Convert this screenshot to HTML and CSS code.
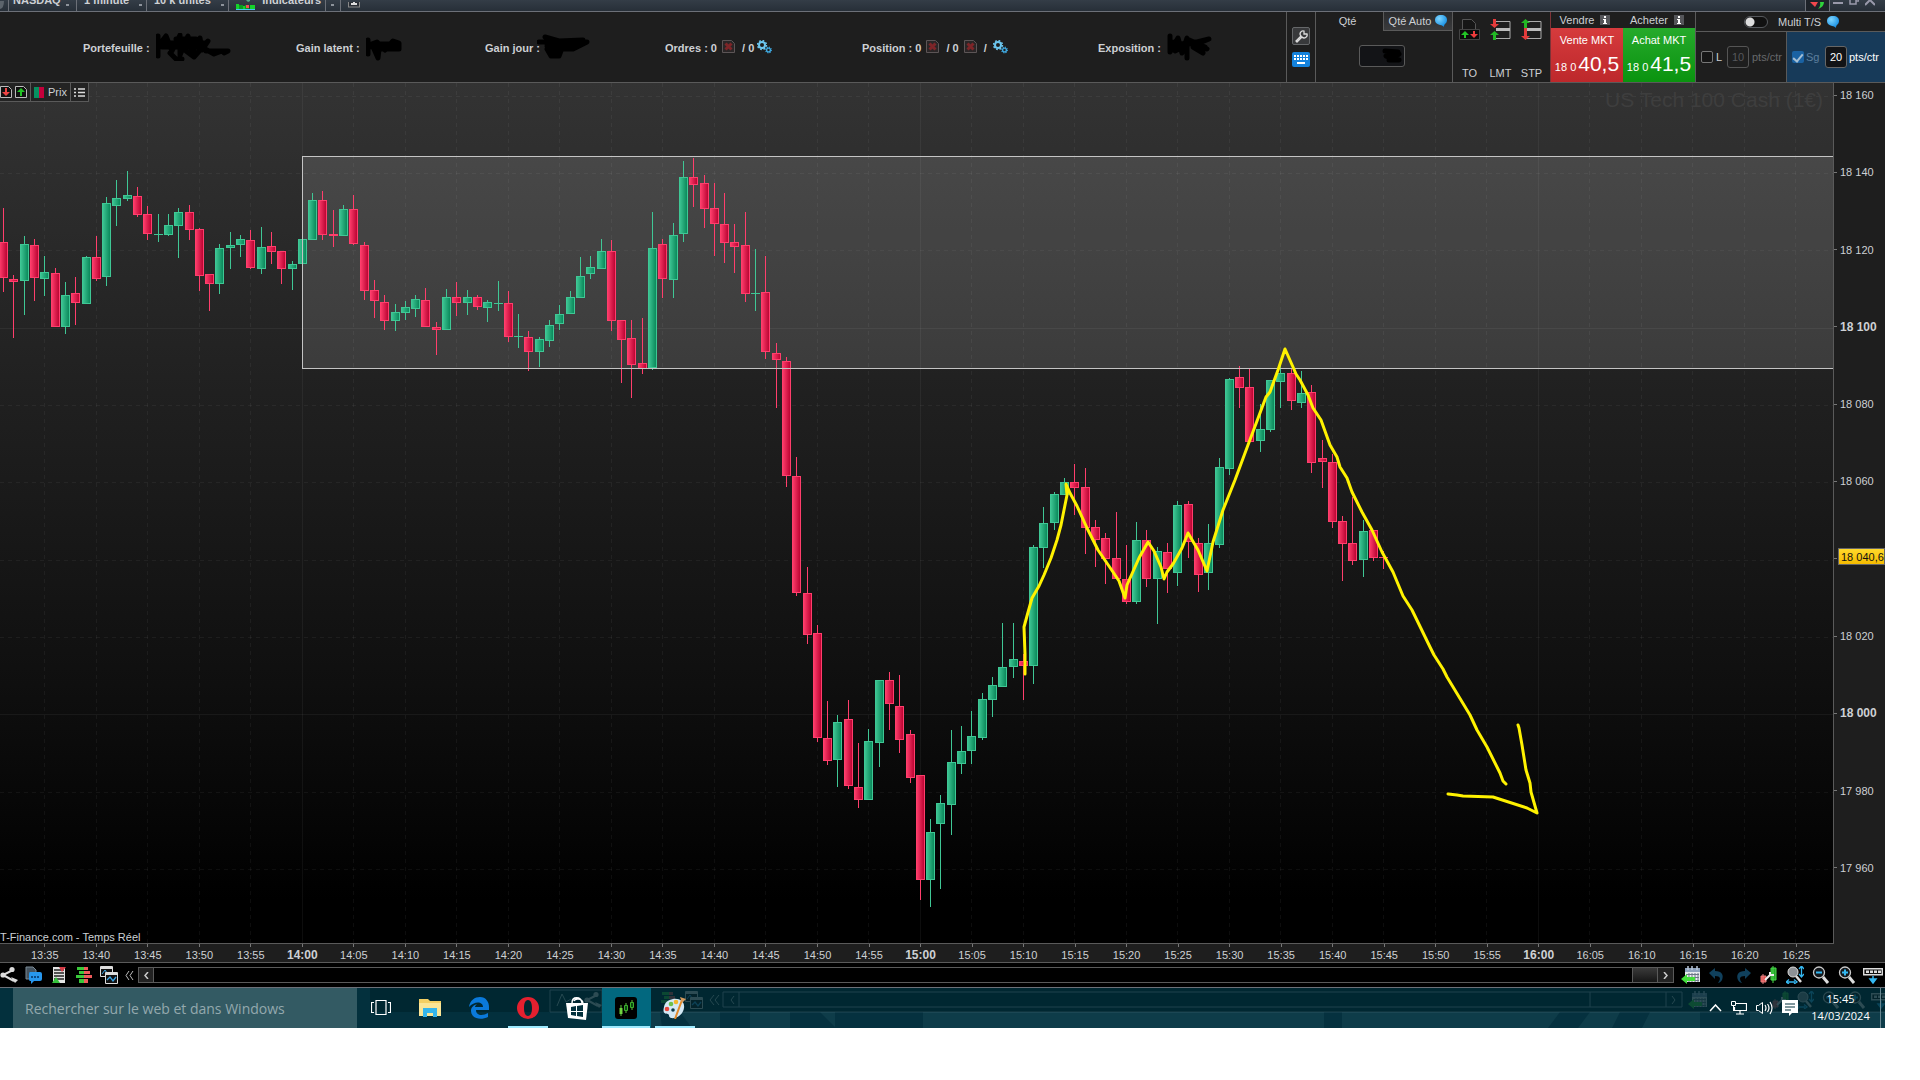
FILE: index.html
```
<!DOCTYPE html>
<html lang="fr">

<head>
    <meta charset="UTF-8">
    <title>US Tech 100 Cash (1€)</title>
    <link rel="stylesheet" href="styles.css">
</head>

<body>
    <!-- shared icons -->
    <svg class="defs" width="0" height="0">
        <defs>
            <linearGradient id="up"><stop offset="0" stop-color="#3fc795"/><stop offset="1" stop-color="#078557"/></linearGradient>
            <linearGradient id="down"><stop offset="0" stop-color="#ff3e6c"/><stop offset="1" stop-color="#b8002f"/></linearGradient>
            <radialGradient id="ball" cx=".35" cy=".3" r=".8"><stop offset="0" stop-color="#7fd6ff"/><stop offset="1" stop-color="#0a86e0"/></radialGradient>
        </defs>
        <symbol id="i-bubble" viewBox="0 0 12 12"><path d="M6 0C2 0 0 2 0 5s2 4 5 5c2 0 3 1 4 2 0-1 0-2 1-3 1-1 2-2 2-4 0-3-2-5-6-5z" fill="url(#ball)"/></symbol>
        <symbol id="i-info" viewBox="0 0 10 10"><rect width="10" height="10" fill="#55565a"/><path d="M4 1h2v2H4zM3 4h3v4h1v1H3V8h1V5H3z" fill="#fff"/></symbol>
        <symbol id="i-cancel" viewBox="0 0 13 13"><path d="M.5.5h9l3 3v9H.5z" fill="#2a2627" stroke="#5c5556"/><path d="M3.5 3.5l6 6m0-6l-6 6" stroke="#7d2528" stroke-width="3"/></symbol>
        <symbol id="i-gears" viewBox="0 0 15 14">
            <circle cx="5" cy="5" r="3" fill="none" stroke="#6cc6ee" stroke-width="2"/>
            <circle cx="5" cy="5" r="4.4" fill="none" stroke="#6cc6ee" stroke-width="1.6" stroke-dasharray="1.7 1.75"/>
            <circle cx="11.5" cy="10" r="1.9" fill="none" stroke="#3fa9e0" stroke-width="1.4"/>
            <circle cx="11.5" cy="10" r="2.8" fill="none" stroke="#3fa9e0" stroke-width="1.2" stroke-dasharray="1.1 1.1"/>
        </symbol>
        <symbol id="i-share" viewBox="0 0 18 18"><path d="M13 4L3 9l11 6" fill="none" stroke="#ddd" stroke-width="2"/><circle cx="12" cy="3.500" r="2.600" fill="#ddd"/><circle cx="3" cy="9" r="2.600" fill="#ddd"/><path d="M11 11l7 3-3 3z" fill="#ddd"/></symbol>
        <symbol id="i-comment" viewBox="0 0 18 18"><path d="M1 1h7l3 3v9H1z" fill="#45525d" stroke="#7b8a96"/><path d="M5 6h10q2 0 2 2v5q0 2-2 2H9l-3 3v-3H5q-1 0-1-2V8q0-2 1-2z" fill="#2797ee"/><path d="M6 10h2v2H6zm3 0h2v2H9zm3 0h2v2h-2z" fill="#0a4a86"/></symbol>
        <symbol id="i-doc" viewBox="0 0 18 18"><path d="M3 1h12v16H3z" fill="#e4e4e4"/><path d="M4 4h10M4 7h10M4 10h10M4 13h10" stroke="#222" stroke-width="1.500"/><path d="M9 1h7l-4 5z" fill="#d33a44"/><path d="M2 17h8l-4-6z" fill="#35c23c"/></symbol>
        <symbol id="i-book" viewBox="0 0 18 18"><path d="M2 1h7v3H2zM4 5h5v3H4zM1 9h8v3H1zM4 13h5v4H4z" fill="#39c83a"/><path d="M9 1h4v3H9zM9 5h6v3H9zM9 9h8v3H9zM9 13h4v4H9z" fill="#ef5b5b"/></symbol>
        <symbol id="i-charts" viewBox="0 0 18 18"><path d="M.5.5h12v10H.5z" fill="#111" stroke="#ddd"/><path d="M.5 2h12" stroke="#ddd" stroke-width="2"/><path d="M2 8l3-4 2 3" fill="none" stroke="#3aa6e8"/><path d="M5.500 6.500h12v11h-12z" fill="#111" stroke="#ddd"/><path d="M5.500 8h12" stroke="#ddd" stroke-width="2"/><path d="M7 14l3-3 3 4 3-4" fill="none" stroke="#3aa6e8" stroke-width="1.300"/></symbol>
        <symbol id="i-calendar" viewBox="0 0 20 18"><path d="M4 2h15v14H4z" fill="#e7eaee"/><path d="M4 2h15v4H4z" fill="#8ea2bd"/><path d="M7 0v4m4-4v4m5-4v4" stroke="#b9c6d8" stroke-width="1.500"/><path d="M5 8.500h13m-13 3h13m-13 3h13M8 7v9m3-9v9m3-9v9m3-9v9" stroke="#6c7686"/><path d="M0 13l6-5v3h8v4H6v3z" fill="#43dc3b"/></symbol>
        <symbol id="i-undo" viewBox="0 0 16 16"><path d="M0 6l6-5v3c7 0 9 4 7 9-1 2-3 3-4 3 3-4 3-7-3-7v3z" fill="#10405c"/></symbol>
        <symbol id="i-tool" viewBox="0 0 18 18"><path d="M1 10h5v6H1zM3 8v10" fill="#e14d4d" stroke="#e98080"/><path d="M11 2h5v12h-5zM13 0v17" fill="#28a12c" stroke="#46dc49"/><path d="M5 14l5-5V6m0 3h4" fill="none" stroke="#eee" stroke-width="2"/></symbol>
        <symbol id="i-fit" viewBox="0 0 18 18"><circle cx="7" cy="6" r="5" fill="#8d9196" stroke="#ddd"/><path d="M10 10l5 6" stroke="#ddd" stroke-width="2.500"/><path d="M15.500 1v9M13 3l2.500-3L18 3M13 8l2.500 3L18 8M1 16h8M3 13.500L0 16l3 2M8 13.500l3 2.500-3 2" fill="none" stroke="#35b8f2" stroke-width="1.300"/></symbol>
        <symbol id="i-zoomout" viewBox="0 0 18 18"><circle cx="7" cy="6.500" r="5.500" fill="#14181c" stroke="#ccc" stroke-width="1.300"/><path d="M11 11l5 6" stroke="#ddd" stroke-width="3"/><path d="M4 6.500h6" stroke="#35b8f2" stroke-width="2"/></symbol>
        <symbol id="i-zoomin" viewBox="0 0 18 18"><use href="#i-zoomout"/><path d="M7 3.500v6" stroke="#35b8f2" stroke-width="2"/></symbol>
        <symbol id="i-panel" viewBox="0 0 20 18"><path d="M.7 2.700h18.600v6H.7z" fill="#111" stroke="#ddd" stroke-width="1.400"/><path d="M3 4.500h3v2.500H3zm4 0h3v2.500H7zm4 0h3v2.500h-3zm4 0h3v2.500h-3z" fill="#ddd"/><path d="M10 10v6M7 13l3 4 3-4z" stroke="#35b8f2" stroke-width="1.500" fill="#35b8f2"/></symbol>
    </svg>

    <div class="screen">
        <header class="titlebar">
            <button class="tab tab-edge" aria-label="Horloge"><svg width="5" height="10" viewBox="0 0 5 10"><path d="M0 0h4q0 7-4 8z" fill="#5c646c"/></svg></button>
            <button class="tab tab-symbol">NASDAQ <i></i></button>
            <button class="tab tab-unit">1 minute <i></i></button>
            <button class="tab tab-count">10 k unités <i></i></button>
            <button class="tab tab-indic"><svg width="19" height="10" viewBox="0 0 19 10"><path d="M0 4h3v5H0zm7 2h2v3H7zm7-1h5v4h-5z" fill="#16d32a"/><path d="M3 5h4v4H3zm6 0h4v4H9z" fill="#0a9c20"/><path d="M10 5h3v3h-3z" fill="#f05252"/><path d="M0 9.500h19" stroke="#45c6f3"/><path d="M10 0h4v1l-2 1z" fill="#5a8"/></svg>Indicateurs</button>
            <button class="tab tab-more" aria-label="Plus"><i></i></button>
            <button class="tab tab-info" aria-label="Information"><svg width="12" height="6"><rect x=".5" y="-6" width="11" height="11" fill="#2b2f36" stroke="#888"/><path d="M3 2h6M6-1v3" stroke="#ddd" stroke-width="2"/></svg></button>
            <span class="grow"></span>
            <button class="tab tab-sync" aria-label="Synchroniser"><svg width="16" height="8" viewBox="0 0 16 8"><path d="M0 0h8L5 5z" fill="#f2474d"/><path d="M14 0q0 5-6 7 3-3 2-7z" fill="#2fd23b"/></svg></button>
            <button class="win" aria-label="Réduire"><svg width="10" height="6"><path d="M0 3h10" stroke="#99a" stroke-width="2"/></svg></button>
            <button class="win" aria-label="Restaurer"><svg width="10" height="6"><path d="M1 0v4h6V0M7 1h3V0" fill="none" stroke="#99a" stroke-width="1.500"/></svg></button>
            <button class="win" aria-label="Fermer"><svg width="10" height="6"><path d="M0 5l5-5 5 5" fill="none" stroke="#99a" stroke-width="2"/></svg></button>
        </header>

        <section class="trading">
            <div class="account">
                <div>Portefeuille : <svg class="ink" width="75" height="28" viewBox="0 0 75 28"><path d="M2 3v20M3 12L10 3 16 18 24 2 24 22 32 3 36 20 44 5 46 17 52 8 38 24 30 18M8 10h40M6 14h40M14 20l6 6h6M20 6h20M42 12l16 9 8-3M50 18h22l-4 2"/></svg></div>
                <div>Gain latent : <svg class="ink" width="38" height="28" viewBox="0 0 38 28"><path d="M2 7v14M3 12l8-3 8 8 8-9 6 2v6H8l4 9 1-9M6 14h26M8 11h24"/></svg></div>
                <div>Gain jour : <svg class="ink ink-over" width="53" height="28" viewBox="0 0 53 28"><path d="M2 9h48L36 16H10l4 7h8l3-8M8 4l14 4 24-1M10 11h36M14 18h8M10 13h26"/></svg></div>
                <div>Ordres : 0 <svg class="x" width="13" height="13"><use href="#i-cancel"/></svg> / 0 <svg class="g" width="15" height="14"><use href="#i-gears"/></svg></div>
                <div>Position : 0 <svg class="x" width="13" height="13"><use href="#i-cancel"/></svg> / 0 <svg class="x" width="13" height="13"><use href="#i-cancel"/></svg> /  <svg class="g" width="15" height="14"><use href="#i-gears"/></svg></div>
                <div>Exposition : <svg class="ink" width="46" height="28" viewBox="0 0 46 28"><path d="M3 3v16l8-14 4 15 5-15v20M5 9l12 2M5 14h14M8 18l14-7 20-5-12 5 10 5-14-2 10 6M20 6l18 8M20 9h14"/></svg></div>
            </div>

            <div class="tools">
                <button class="tool" aria-label="Réglages"><svg width="14" height="14" viewBox="0 0 14 14"><path d="M2 12l5-5a3 3 0 0 1 3-5v3h3a3 3 0 0 1-5 3l-5 5z" fill="none" stroke="#ddd" stroke-width="1.300"/></svg></button>
                <button class="tool tool-keys" aria-label="Clavier"><svg width="14" height="10" viewBox="0 0 14 10"><path d="M0 1h14M0 4h14" stroke="#fff" stroke-width="2" stroke-dasharray="2 1"/><path d="M3 8h8" stroke="#fff" stroke-width="2"/></svg></button>
            </div>

            <div class="qty">
                <div class="qty-tabs">
                    <label for="qte">Qté</label>
                    <button>Qté Auto <svg width="12" height="12"><use href="#i-bubble"/></svg></button>
                </div>
                <div class="qty-field">
                    <input id="qte" type="text">
                    <svg class="ink" width="20" height="16" viewBox="0 0 20 16"><path d="M3 3l13 1-12 4 13 4H7l10-6"/></svg>
                </div>
            </div>

            <div class="orders">
                <button><svg width="21" height="21" viewBox="0 0 21 21"><path d="M3.500 10V.5h9l4 4V10" fill="#161616" stroke="#555"/><path d="M.5 10.500h20v10H.5z" fill="#0c0c0c" stroke="#444"/><path d="M6 12l4 4H7v3H5v-3H2z" fill="#22c325"/><path d="M15 19l4-4h-3v-3h-2v3h-3z" fill="#ee3b3b"/></svg>TO</button>
                <button><svg width="21" height="21" viewBox="0 0 21 21"><path d="M4 2.500h16v17H4" fill="none" stroke="#aaa"/><path d="M6 10.500h14" stroke="#bbb" stroke-width="3"/><path d="M3 0h3v5h3L4.500 9 0 5h3z" fill="#e43b3b"/><path d="M3 21h3v-5h3l-4.500-4L0 16h3z" fill="#22b825"/></svg>LMT</button>
                <button><svg width="21" height="21" viewBox="0 0 21 21"><path d="M4 2.500h16v17H4" fill="none" stroke="#aaa"/><path d="M6 10.500h14" stroke="#bbb" stroke-width="3"/><path d="M3 9h3V4h3L4.500 0 0 4h3z" fill="#22b825"/><path d="M3 9h3v8h3l-4.500 4L0 17h3z" fill="#e43b3b"/></svg>STP</button>
            </div>

            <div class="deal">
                <div class="deal-head">Vendre <svg width="10" height="10"><use href="#i-info"/></svg></div>
                <button class="sell">Vente MKT<span><small>18 0</small>40,5</span></button>
            </div>
            <div class="deal">
                <div class="deal-head">Acheter <svg width="10" height="10"><use href="#i-info"/></svg></div>
                <button class="buy">Achat MKT<span><small>18 0</small>41,5</span></button>
            </div>

            <div class="stops">
                <div class="multi">
                    <input type="checkbox" id="multi" class="switch">
                    <label for="multi">Multi T/S</label>
                    <svg width="12" height="12"><use href="#i-bubble"/></svg>
                </div>
                <div class="stop-row">
                    <div class="limit">
                        <input type="checkbox" id="limit"><label for="limit">L</label>
                        <input type="text" value="10" aria-label="Limite" disabled><span class="dim">pts/ctr</span>
                    </div>
                    <div class="guard">
                        <input type="checkbox" id="guard" checked><label for="guard" class="dim">Sg</label>
                        <input type="text" value="20" aria-label="Stop garanti"><span>pts/ctr</span>
                    </div>
                </div>
            </div>
        </section>

        <main class="chart">
            <div class="plot">
                <svg id="plot" viewBox="0 83 1833 860" preserveAspectRatio="none">
                    <g id="grid"></g>
                    <rect class="zone" x="302" y="156" width="1540" height="213"/>
                    <g id="candles"></g>
                    <path class="zone-line" d="M1840 156.500H302.500v212H1840"/>
                    <path class="pen" d="M1025 674V654L1024 627 1027 616 1032 598 1039 586 1044 575 1051 558 1057 540 1061 525 1064 510 1067 495 1066 484 1070 493 1077 506 1087 528 1098 550 1113 572 1119 581 1125 598 1127 585 1139 558 1148 542 1154 551 1161 567 1164 579 1167 572 1173 564 1182 548 1188 533 1198 550 1207 571 1213 542 1223 510 1235 480 1248 445 1260 413 1266 397 1270 392 1278 370 1285 349 1293 367 1296 374 1300 380 1308 395 1313 408 1321 420 1330 445 1337 457 1340 467 1347 478 1352 492 1362 512 1372 530 1382 552 1393 572 1403 596 1412 610 1430 647 1434 655 1443 669 1447 677 1470 715 1477 730 1487 747 1500 773 1503 781 1506 784"/>
                    <path class="pen" d="M1518 725L1519 728 1522 745 1526 770 1530 783 1531 792 1537 813 1527 808 1493 797 1463 796 1457 795 1448 794"/>
                </svg>
                <div class="watermark">US Tech 100 Cash (1€)</div>
                <div class="legend">
                    <button aria-label="Vendre"><svg width="12" height="12" viewBox="0 0 12 12"><path d="M.5.5h8l3 3v8H.5z" fill="#111" stroke="#bbb"/><path d="M5 2h2v4h3l-4 4-4-4h3z" fill="#f04444"/></svg></button>
                    <button aria-label="Acheter"><svg width="12" height="12" viewBox="0 0 12 12"><path d="M.5.5h8l3 3v8H.5z" fill="#111" stroke="#bbb"/><path d="M5 10h2V6h3L6 2 2 6h3z" fill="#22c325"/></svg></button>
                    <button class="legend-price"><svg width="10" height="11"><rect width="5" height="11" fill="#079060"/><rect x="5" width="5" height="11" fill="#c4003b"/></svg>Prix</button>
                    <button class="legend-list" aria-label="Liste"><svg width="11" height="9" viewBox="0 0 11 9"><path d="M0 1h2m2 0h7M0 4.500h2m2 0h7M0 8h2m2 0h7" stroke="#ddd" stroke-width="1.500"/></svg></button>
                </div>
                <div class="source">IT-Finance.com - Temps Réel</div>
            </div>
            <div class="prices">
                <ol id="prices"></ol>
                <div class="last">18 040,6</div>
            </div>
        </main>

        <ol class="times" id="times"></ol>

        <nav class="bottombar">
            <button aria-label="Partager"><svg width="18" height="18"><use href="#i-share"/></svg></button>
            <button aria-label="Commentaires"><svg width="18" height="18"><use href="#i-comment"/></svg></button>
            <button aria-label="Rapport"><svg width="18" height="18"><use href="#i-doc"/></svg></button>
            <button aria-label="Carnet"><svg width="18" height="18"><use href="#i-book"/></svg></button>
            <button aria-label="Graphiques"><svg width="18" height="18"><use href="#i-charts"/></svg></button>
            <button class="fold" aria-label="Replier"><svg width="9" height="9" viewBox="0 0 9 9"><path d="M4 0L1 4.500 4 9M8 0L5 4.500 8 9" fill="none" stroke="#bbb"/></svg></button>
            <div class="scroll">
                <button aria-label="Reculer"><svg width="5" height="7" viewBox="0 0 5 7"><path d="M4 0L1 3.500 4 7" fill="none" stroke="#ccc" stroke-width="1.500"/></svg></button>
                <span class="grow"></span>
                <span class="thumb"></span>
                <button aria-label="Avancer"><svg width="5" height="7" viewBox="0 0 5 7"><path d="M1 0l3 3.500L1 7" fill="none" stroke="#ccc" stroke-width="1.500"/></svg></button>
            </div>
            <button aria-label="Calendrier"><svg width="20" height="18"><use href="#i-calendar"/></svg></button>
            <button aria-label="Annuler"><svg width="16" height="16"><use href="#i-undo"/></svg></button>
            <button aria-label="Rétablir"><svg class="flip" width="16" height="16"><use href="#i-undo"/></svg></button>
            <button aria-label="Style"><svg width="18" height="18"><use href="#i-tool"/></svg></button>
            <button aria-label="Ajuster"><svg width="18" height="18"><use href="#i-fit"/></svg></button>
            <button aria-label="Zoom arrière"><svg width="18" height="18"><use href="#i-zoomout"/></svg></button>
            <button aria-label="Zoom avant"><svg width="18" height="18"><use href="#i-zoomin"/></svg></button>
            <button aria-label="Panneau"><svg width="20" height="18"><use href="#i-panel"/></svg></button>
        </nav>

        <footer class="taskbar">
            <!-- the window shows faintly through the bar -->
            <svg class="ghost" viewBox="0 0 1885 40" preserveAspectRatio="none">
                <path d="M370 0h1515v24H370z" fill="#00242c" opacity=".7"/>
                <path d="M640 24h1245v16H640z" fill="#164552" opacity=".6"/>
                <path d="M660 24h20l12 16h-30zM720 24h30v16h-30zM790 24h30l16 16h-46zM835 24h88v16h-88zM1324 24h18v16h-18zM1560 24h30l-12 16h-30zM1620 24h30l-8 16h-30zM1700 24h50v16h-50z" fill="#002a38" opacity=".6"/>
                <g opacity=".2">
                    <path d="M550 2h52v22h-52zM723 4h959v15H723zM739 4v15M1590 4v15M1666 4v15M640 24h1245" fill="none" stroke="#9ab"/>
                    <path d="M714 7l-4 5 4 5m5-10l-4 5 4 5M734 8l-3 4 3 4M1672 8l3 4-3 4M557 18l5-12 4 8 5-3" fill="none" stroke="#bcc"/>
                    <use href="#i-share" x="584" y="3" width="18" height="18"/>
                    <use href="#i-comment" x="610" y="3" width="18" height="18"/>
                    <use href="#i-book" x="660" y="3" width="18" height="18"/>
                    <use href="#i-charts" x="685" y="3" width="18" height="18"/>
                    <use href="#i-calendar" x="1688" y="3" width="20" height="18"/>
                    <use href="#i-tool" x="1772" y="3" width="18" height="18"/>
                    <use href="#i-fit" x="1796" y="3" width="18" height="18"/>
                    <use href="#i-zoomout" x="1822" y="3" width="18" height="18"/>
                    <use href="#i-zoomin" x="1848" y="3" width="18" height="18"/>
                    <use href="#i-panel" x="1871" y="3" width="20" height="18"/>
                </g>
            </svg>
            <input class="search" type="text" placeholder="Rechercher sur le web et dans Windows" aria-label="Rechercher">
            <button aria-label="Vue des tâches"><svg width="20" height="18" viewBox="0 0 20 18"><path d="M5 1.500h10v14H5zM3 3.500H.5v10H3M17 3.500h2.500v10H17" fill="none" stroke="#fff" stroke-width="1.200"/></svg></button>
            <button aria-label="Explorateur"><svg width="22" height="20" viewBox="0 0 22 20"><path d="M0 1h9l2 2h11v15H0z" fill="#f4cf63"/><path d="M0 5h22v13H0z" fill="#fbe596"/><path d="M4 10h14v9h-4v-4H8v4H4z" fill="#35b5ec"/></svg></button>
            <button aria-label="Edge"><svg width="22" height="22" viewBox="0 0 22 22"><path d="M1 10C2 3 7 0 12 0c6 0 9 5 9 10v3H8c0 6 7 6 12 3v4C12 24 3 21 3 14c0-4 3-6 6-7-1 1-2 2-2 3h8c0-6-9-6-14 0z" fill="#0a79da"/></svg></button>
            <button class="running" aria-label="Opera"><svg width="22" height="22" viewBox="0 0 22 22"><path fill-rule="evenodd" d="M11 0a11 11 0 1 0 0 22 11 11 0 1 0 0-22zm0 3c3 0 4 4 4 8s-1 8-4 8-4-4-4-8 1-8 4-8z" fill="#e5202f"/></svg></button>
            <button aria-label="Store"><svg width="22" height="23" viewBox="0 0 22 23"><path d="M6 6c0-7 9-7 10 0M8 4c1-3 8-3 9 2" fill="none" stroke="#fff" stroke-width="1.400"/><path d="M0 6h22l-2 17-18-2z" fill="#fff"/><path d="M5 10l5-1v5H5zm6-1l6-1v6h-6zM5 15h5v4l-5-1zm6 0h6v5l-6-1z" fill="#02303c"/></svg></button>
            <button class="running current" aria-label="ProRealTime"><svg width="22" height="22" viewBox="0 0 22 22"><rect width="22" height="22" rx="3" fill="#000"/><path d="M6 8v11M11 6v10M17 3v10" stroke="#5cc23d"/><path d="M4.500 11h3v6h-3z" fill="#6fd43f"/><path d="M9.500 8.500h3v5h-3zM15.500 5.500h3v5h-3z" fill="#0b4a12" stroke="#3cae2c"/></svg></button>
            <button class="running" aria-label="Paint"><svg width="24" height="22" viewBox="0 0 24 22"><path d="M10 2c7-1 12 3 11 9-1 7-8 11-13 10-3-1-1-3-3-4-5 0-5-3-4-7 1-5 4-7 9-8z" fill="#d3e8f4"/><circle cx="4" cy="12" r="2.300" fill="#e8483b"/><circle cx="8" cy="7" r="2.300" fill="#6cc04a"/><circle cx="13" cy="5" r="2.300" fill="#f4b62c"/><circle cx="10" cy="13" r="1.800" fill="#0b3846"/><path d="M12 22l7-19" stroke="#e18a2b" stroke-width="2"/><path d="M17 0l6 2-4 4z" fill="#d39a5d"/></svg></button>
            <span class="grow"></span>
            <div class="tray">
                <svg width="13" height="8" viewBox="0 0 13 8"><path d="M1 7l5.500-6L12 7" fill="none" stroke="#fff" stroke-width="1.500"/></svg>
                <svg width="16" height="14" viewBox="0 0 16 14"><path d="M5 2.500h10.500v7H3.500V6M9 10v3M5 13h8" fill="none" stroke="#fff" stroke-width="1.200"/><path d="M.5.500h4v4h-4zM2.500 4v6" fill="none" stroke="#fff"/></svg>
                <svg width="17" height="14" viewBox="0 0 17 14"><path d="M.5 4.500h2l4-3v11l-4-3h-2z" fill="none" stroke="#fff"/><path d="M9 4q2 3 0 6M11.500 3q3 4 0 8M14 1q4 6 0 12" fill="none" stroke="#fff" stroke-width="1.200"/></svg>
                <svg width="16" height="16" viewBox="0 0 16 16"><path d="M0 0h16v13h-6l-3 3v-3H0z" fill="#fff"/><path d="M3 4h10M3 7h10M3 10h6" stroke="#02303c" stroke-width="1.200"/></svg>
            </div>
            <time class="clock">15:45<br>14/03/2024</time>
            <button class="desktop" aria-label="Afficher le bureau"></button>
        </footer>
    </div>

    <script src="chart.js"></script>
</body>

</html>
```
FILE: styles.css
```
* {
    box-sizing: border-box;
}

body {
    margin: 0;
    background: #fff;
    color: #cdd0d4;
    font: 11px/14px "Liberation Sans", Arial, sans-serif;
}

button {
    display: flex;
    align-items: center;
    justify-content: center;
    padding: 0;
    border: 0;
    background: none;
    color: inherit;
    font: inherit;
}

input {
    margin: 0;
    color: inherit;
    font: inherit;
}

ol {
    margin: 0;
    padding: 0;
    list-style: none;
}

svg {
    flex: none;
}

.defs {
    position: absolute;
}

.grow {
    flex: 1;
}

.screen {
    display: flex;
    flex-direction: column;
    height: calc(100vh - 52px);
    margin-right: 35px;
    overflow: hidden;
    background: #1e1e1e;
}

/* title bar, its top is off screen */
.titlebar {
    display: flex;
    flex: none;
    height: 12px;
    overflow: hidden;
    background: linear-gradient(#343d47, #272f38);
    border-bottom: 1px solid #6c7078;
    font-weight: bold;
}

.tab {
    height: 11px;
    padding: 0 4px 10px 7px;
    justify-content: space-between;
    border-right: 1px solid #6c7078;
    line-height: 11px;
}

.tab i {
    width: 3px;
    height: 2px;
    margin-top: 8px;
    background: #8d939b;
}

.tab svg {
    margin-top: 9px;
}

.tab-edge { width: 9px; padding: 0; }
.tab-symbol { width: 68px; padding-left: 4px; padding-right: 7px; }
.tab-unit { width: 70px; }
.tab-count { width: 82px; }
.tab-indic { width: 97px; }
.tab-more { width: 15px; padding-left: 5px; }
.tab-info { width: 30px; border: 0; }
.tab-sync { width: 25px; padding: 0 4px; border-left: 1px solid #6c7078; background: #1e2329; }

.tab-edge svg,
.tab-sync svg {
    margin-top: 0;
}

.win {
    width: 16px;
    height: 6px;
}

.win:last-child {
    margin-right: 7px;
}

/* trading bar */
.trading {
    display: flex;
    flex: none;
    height: 71px;
    border-bottom: 1px solid #5a5a5a;
}

.account {
    display: grid;
    flex: 1;
    grid-template-columns: 213fr 189fr 180fr 197fr 236fr 188fr;
    align-items: center;
    padding: 2px 0 0 83px;
    font-weight: bold;
    white-space: pre;
}

.account > div {
    display: flex;
    align-items: center;
    height: 28px;
}

.x { margin: 0 4px 4px 2px; }
.g { margin-bottom: 3px; }

.ink path {
    fill: none;
    stroke: #000;
    stroke-width: 5;
    stroke-linecap: round;
    stroke-linejoin: round;
}

.account .ink {
    margin: 0 0 2px 3px;
}

.account .ink-over {
    margin-left: -6px;
}

.tools {
    display: flex;
    flex-direction: column;
    gap: 7px;
    width: 30px;
    padding: 15px 5px;
    border: solid #5a5a5a;
    border-width: 0 1px;
}

.tool {
    width: 18px;
    height: 18px;
    background: #38393b;
    border: 1px solid #66686a;
    border-radius: 2px;
}

.tool-keys {
    height: 15px;
    background: #1482dc;
    border: 0;
}

.qty {
    width: 136px;
}

.qty-tabs {
    display: grid;
    grid-template-columns: 1fr 69px;
    height: 18px;
    line-height: 18px;
    text-align: center;
}

.qty-tabs label {
    padding-right: 4px;
}

.qty-tabs button {
    gap: 4px;
    background: linear-gradient(#292a2c, #3a3b3d);
    border: solid #5a5a5a;
    border-width: 0 0 1px 1px;
}

.qty-field {
    display: flex;
    align-items: center;
    width: 46px;
    height: 22px;
    margin: 15px 0 0 43px;
    border: 1px solid #5a5a5a;
    border-radius: 3px;
    background: #131417;
}

.qty-field input {
    width: 22px;
    border: 0;
    background: none;
}

.orders {
    display: flex;
    gap: 10px;
    width: 98px;
    padding: 7px 7px 2px 6px;
    border-left: 1px solid #5a5a5a;
}

.orders button {
    flex-direction: column;
    justify-content: space-between;
    width: 21px;
}

.deal {
    display: flex;
    flex-direction: column;
    width: 73px;
    border-left: 1px solid #7e3337;
}

.deal + .deal {
    border-left: 0;
    border-right: 1px solid #5a5a5a;
}

.deal-head {
    display: flex;
    align-items: center;
    justify-content: center;
    gap: 6px;
    height: 16px;
    padding: 0 4px 1px 0;
}

.sell,
.buy {
    flex: 1;
    flex-direction: column;
    gap: 6px;
    color: #fff;
}

.sell { background: linear-gradient(#d63b3d, #bd282b); }
.buy { background: linear-gradient(#26aa2c, #0a930f); }

.deal button span {
    font-size: 21px;
    line-height: 21px;
}

.deal small {
    margin-right: 2px;
    font-size: 11px;
}

.stops {
    display: flex;
    flex-direction: column;
    width: 189px;
}

.multi {
    display: flex;
    align-items: center;
    gap: 6px;
    height: 20px;
    padding-left: 48px;
    border-bottom: 1px solid #5a5a5a;
}

.switch {
    width: 24px;
    height: 12px;
    margin-right: 4px;
    appearance: none;
    border: 1px solid #55585c;
    border-radius: 6px;
    background: radial-gradient(circle at 5px 5px, #ddd 4px, #111 5px);
}

.stop-row {
    display: flex;
    flex: 1;
}

.limit,
.guard {
    display: flex;
    align-items: center;
    gap: 3px;
    padding-left: 5px;
}

.limit { width: 90px; }

.guard {
    flex: 1;
    gap: 2px;
    border-left: 1px solid #5a5a5a;
    background: #173a59;
    color: #fff;
}

.limit label { width: 8px; }
.guard label { width: 17px; }

.stop-row input[type="checkbox"] {
    display: flex;
    justify-content: center;
    width: 12px;
    height: 12px;
    appearance: none;
    border: 1px solid #777;
    border-radius: 2px;
    background: #161616;
}

.stop-row input[type="checkbox"]:checked {
    border: 0;
    background: #1a62a3;
}

.stop-row input:checked::before {
    content: "";
    width: 4px;
    height: 8px;
    margin-top: 1px;
    border: solid #a5bfd4;
    border-width: 0 2px 2px 0;
    transform: rotate(40deg);
}

.stop-row input[type="text"] {
    width: 22px;
    height: 22px;
    padding: 0;
    border: 1px solid #666;
    border-radius: 3px;
    background: #121316;
    text-align: center;
}

.stop-row input[type="text"]:disabled {
    border-color: #555;
    background: #1e1e1e;
    color: #56585b;
}

.limit .dim { color: #66686b; }
.guard .dim { color: #5c7f9e; }

/* chart */
.chart {
    display: flex;
    flex: 1;
    min-height: 0;
}

.plot {
    position: relative;
    flex: 1;
    border: solid #5a5a5a;
    border-width: 0 1px 1px 0;
    background: linear-gradient(#333 0%, #202020 36%, #0f0f0f 70%, #000 95%);
}

#plot {
    position: absolute;
    width: 100%;
    height: 100%;
}

#grid path {
    fill: none;
    stroke: #fff;
    stroke-opacity: .05;
    shape-rendering: crispEdges;
}

#grid .minor {
    stroke-dasharray: 4 4;
}

.zone {
    fill: #fff;
    fill-opacity: .12;
}

.zone-line {
    fill: none;
    stroke: #c4c4c4;
    shape-rendering: crispEdges;
}

#candles {
    shape-rendering: crispEdges;
}

.up { fill: url(#up); stroke: #3fc795; }
.down { fill: url(#down); stroke: #ff3e6c; }

.pen {
    fill: none;
    stroke: #fff200;
    stroke-width: 3;
    stroke-linecap: round;
    stroke-linejoin: round;
}

.watermark {
    position: absolute;
    top: 5px;
    right: 10px;
    color: #3e3e3e;
    font-size: 21px;
    line-height: 24px;
}

.legend {
    position: absolute;
    top: 0;
    left: 0;
    display: flex;
    height: 19px;
    border: solid #5a5a5a;
    border-width: 0 1px 1px 0;
    background: #232323;
}

.legend button {
    padding-right: 3px;
}

.legend-price {
    gap: 4px;
    padding-left: 3px;
    border: solid #5a5a5a;
    border-width: 0 1px;
}

.legend-list {
    padding-left: 3px;
}

.source {
    position: absolute;
    bottom: -1px;
    left: -3px;
}

.prices {
    position: relative;
    width: 51px;
}

#prices {
    display: flex;
    flex-direction: column;
    justify-content: space-between;
    height: 100%;
    padding: 5px 0 69px;
}

#prices li {
    display: flex;
    align-items: center;
    gap: 3px;
    height: 14px;
}

#prices li::before {
    content: "";
    width: 3px;
    height: 1px;
    background: #777;
}

#prices .major,
.times .major {
    font-size: 12px;
    font-weight: bold;
}

.last {
    position: absolute;
    top: 54%;
    right: 0;
    width: 47px;
    height: 17px;
    padding-left: 2px;
    border: 1px solid #666;
    background: linear-gradient(#ffd92b, #f5bb00);
    color: #111;
    line-height: 16px;
}

.times {
    display: flex;
    flex: none;
    height: 19px;
    padding: 0 63px 0 19px;
    border-bottom: 1px solid #5a5a5a;
}

.times li {
    flex: 1;
    padding-top: 1px;
    background: linear-gradient(#777, #777) 50% 0 / 1px 3px no-repeat;
    line-height: 20px;
    text-align: center;
}

/* bottom bar */
.bottombar {
    display: flex;
    flex: none;
    align-items: center;
    gap: 7px;
    height: 25px;
    padding-right: 3px;
    background: #000;
    border-bottom: 1px solid #6c7078;
}

.fold {
    margin-right: -3px;
}

.scroll {
    display: flex;
    flex: 1;
    height: 16px;
    border: 1px solid #5a5a5a;
}

.scroll button {
    width: 15px;
    background: #222;
    border-right: 1px solid #5a5a5a;
}

.scroll button:last-child {
    border: 0;
}

.scroll ~ button {
    width: 19px;
}

.thumb {
    width: 26px;
    border: solid #5a5a5a;
    border-width: 0 1px;
    background: linear-gradient(#3a3a3a, #161616);
}

.flip {
    transform: scaleX(-1);
}

/* windows taskbar */
.taskbar {
    position: relative;
    display: flex;
    flex: none;
    height: 40px;
    padding-left: 13px;
    background: #03303d;
    color: #fff;
    font-family: "Open Sans", "Noto Sans", sans-serif;
}

.ghost {
    position: absolute;
    left: 0;
    width: 100%;
    height: 40px;
}

.taskbar > :not(.ghost) {
    position: relative;
}

.search {
    width: 344px;
    padding: 0 12px;
    border: 0;
    background: #335a63;
    font-size: 14px;
}

.search::placeholder {
    color: #93a9ae;
}

.taskbar button {
    width: 49px;
    border-right: 1px solid transparent;
}

.running {
    background: linear-gradient(#9eeaff, #9eeaff) 50% 100% / 40px 2px no-repeat;
}

.current {
    background: linear-gradient(#9eeaff, #9eeaff) 0 100% / 100% 2px no-repeat #02687f;
}

.tray {
    display: flex;
    align-items: center;
    gap: 9px;
    margin-right: 8px;
}

.clock {
    width: 69px;
    margin-right: 5px;
    padding-top: 2px;
    line-height: 17px;
    text-align: center;
}

.taskbar .desktop {
    width: 5px;
    border-left: 1px solid #688791;
}
```
FILE: chart.js
```
// one row per minute from 13:31: direction, high, body top, body bottom, low
const candles = [
    ["d", 208, 242, 278, 292], ["d", 275, 279, 282, 338], ["u", 236, 244, 281, 315], ["d", 239, 245, 278, 301],
    ["u", 256, 272, 279, 296], ["d", 268, 273, 327, 327], ["u", 282, 295, 327, 334], ["d", 277, 293, 303, 325],
    ["u", 256, 257, 304, 304], ["d", 236, 257, 279, 281], ["u", 197, 203, 277, 286], ["u", 180, 198, 206, 226],
    ["u", 171, 195, 199, 201], ["d", 187, 196, 215, 217], ["d", 206, 214, 234, 240], ["u", 214, 234, 235, 242],
    ["u", 214, 225, 235, 236], ["u", 208, 212, 226, 258], ["d", 205, 212, 230, 240], ["d", 228, 229, 276, 291],
    ["d", 274, 274, 284, 311], ["u", 244, 248, 284, 294], ["u", 232, 245, 248, 269], ["u", 235, 239, 245, 257],
    ["d", 230, 240, 268, 269], ["u", 227, 247, 269, 274], ["d", 232, 246, 252, 264], ["d", 251, 251, 269, 284],
    ["u", 261, 264, 269, 290],
    // 14:00
    ["u", 239, 239, 264, 264], ["u", 193, 200, 240, 240], ["d", 191, 200, 235, 240], ["d", 210, 234, 236, 247],
    ["u", 205, 209, 236, 236], ["d", 195, 209, 244, 245], ["d", 242, 245, 291, 300], ["d", 280, 290, 301, 318],
    ["d", 295, 302, 321, 330], ["u", 304, 312, 321, 331], ["u", 301, 307, 313, 320], ["u", 295, 299, 309, 317],
    ["d", 288, 300, 327, 327], ["d", 322, 327, 330, 355], ["u", 289, 297, 330, 330], ["d", 282, 297, 303, 316],
    ["u", 290, 297, 303, 315], ["d", 295, 297, 307, 310], ["u", 300, 302, 308, 322], ["u", 281, 303, 304, 311],
    ["d", 291, 303, 337, 342], ["u", 314, 336, 337, 348], ["d", 331, 337, 352, 371], ["u", 337, 339, 352, 367],
    ["u", 320, 325, 341, 347], ["u", 305, 314, 324, 330], ["u", 291, 297, 314, 314], ["u", 257, 276, 298, 298],
    ["u", 256, 267, 274, 279], ["u", 239, 251, 269, 269], ["d", 240, 251, 321, 331], ["d", 320, 320, 340, 383],
    ["d", 320, 338, 365, 398], ["d", 318, 363, 369, 374], ["u", 212, 248, 368, 370], ["d", 239, 244, 279, 298],
    ["u", 223, 235, 280, 298], ["u", 161, 177, 234, 242], ["d", 158, 177, 185, 207], ["d", 175, 183, 209, 228],
    ["d", 183, 208, 224, 256], ["d", 193, 224, 243, 263], ["d", 224, 242, 247, 273], ["d", 212, 245, 294, 302],
    ["u", 249, 293, 294, 311], ["d", 256, 292, 352, 359], ["d", 343, 353, 360, 408], ["d", 357, 361, 476, 487],
    ["d", 457, 476, 593, 596], ["d", 567, 593, 635, 644], ["d", 625, 633, 738, 742], ["d", 701, 738, 761, 765],
    ["u", 715, 722, 760, 787], ["d", 700, 719, 786, 789], ["d", 743, 787, 800, 808], ["u", 729, 741, 800, 800],
    ["u", 680, 680, 743, 767], ["d", 672, 680, 704, 730], ["d", 675, 706, 740, 753], ["d", 730, 734, 778, 783],
    // 15:00
    ["d", 775, 775, 880, 900], ["u", 819, 832, 880, 907], ["u", 795, 803, 824, 889], ["u", 730, 762, 805, 835],
    ["u", 726, 751, 764, 774], ["u", 711, 736, 751, 764], ["u", 693, 699, 738, 740], ["u", 677, 685, 700, 717],
    ["u", 623, 667, 687, 687], ["u", 623, 659, 667, 678], ["d", 654, 661, 666, 700], ["u", 545, 547, 666, 684],
    ["u", 507, 523, 548, 568], ["u", 492, 494, 523, 530], ["u", 478, 482, 495, 495], ["d", 464, 482, 488, 515],
    ["d", 468, 487, 528, 554], ["d", 520, 527, 540, 567], ["d", 533, 538, 559, 584], ["d", 512, 558, 579, 579],
    ["d", 545, 579, 602, 604], ["u", 522, 540, 602, 604], ["d", 530, 540, 579, 587], ["u", 547, 551, 579, 624],
    ["d", 543, 552, 569, 593], ["u", 501, 505, 573, 586], ["d", 501, 504, 542, 558], ["d", 538, 543, 575, 592],
    ["u", 524, 543, 573, 590], ["u", 458, 467, 545, 548], ["u", 378, 379, 469, 475], ["d", 366, 377, 388, 408],
    ["d", 369, 387, 442, 442], ["u", 404, 429, 441, 452], ["u", 380, 380, 430, 432], ["u", 360, 373, 382, 408],
    ["d", 369, 373, 401, 410], ["u", 371, 393, 403, 408], ["d", 385, 392, 463, 473], ["d", 440, 458, 462, 488],
    ["d", 454, 462, 522, 528], ["d", 516, 521, 544, 581], ["d", 497, 543, 561, 565], ["u", 520, 531, 560, 577],
    ["d", 530, 530, 558, 561], ["d", 551, 557, 558, 569]
];

// x of a minute counted from 14:00
function minuteX(m) {
    return Math.floor(302.3 + 10.3 * m) + 0.5;
}

let bars = "";
candles.forEach(([dir, high, top, bottom, low], i) => {
    const x = minuteX(i - 29);
    const cls = dir === "u" ? "up" : "down";
    bars += `<path class="${cls}" d="M${x} ${high}V${low}"/>`;
    if (bottom - top > 1) {
        bars += `<rect class="${cls}" x="${x - 4}" y="${top + 0.5}" width="8" height="${bottom - top - 1}"/>`;
    } else {
        bars += `<path class="${cls}" d="M${x - 4.5} ${top + 0.5}h9"/>`;
    }
});
document.getElementById("candles").innerHTML = bars;

let grid = "";
let times = "";
for (let m = -25; m <= 145; m += 5) {
    const major = m % 60 === 0;
    const hour = 14 + Math.floor(m / 60);
    const minute = String((m + 60) % 60).padStart(2, "0");
    grid += `<path class="${major ? "major" : "minor"}" d="M${minuteX(m)} 83V943"/>`;
    times += `<li class="${major ? "major" : "minor"}">${hour}:${minute}</li>`;
}

let prices = "";
for (let p = 18160; p >= 17960; p -= 20) {
    const major = p % 100 === 0;
    const y = Math.floor(96.2 + (18160 - p) * 3.866) + 0.5;
    grid += `<path class="${major ? "major" : "minor"}" d="M0 ${y}H1833"/>`;
    // 18 040 is covered by the last price
    const text = p === 18040 ? "" : `${Math.floor(p / 1000)} ${String(p % 1000).padStart(3, "0")}`;
    prices += `<li class="${major ? "major" : "minor"}">${text}</li>`;
}

document.getElementById("grid").innerHTML = grid;
document.getElementById("times").innerHTML = times;
document.getElementById("prices").innerHTML = prices;
```
